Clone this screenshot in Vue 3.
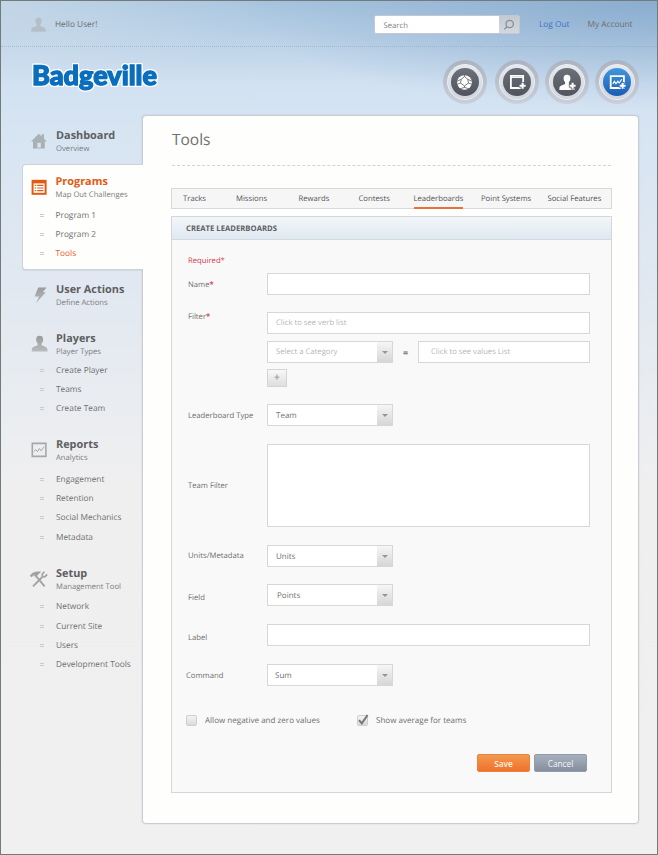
<template>
  <div class="page">
    <header class="topbar">
      <svg class="topbar-avatar" viewBox="0 0 16 16">
        <path :d="personPath" />
      </svg>
      <span class="topbar-hello">Hello User!</span>
      <div class="search">
        <span class="search-text">Search</span>
        <span class="search-button">
          <svg viewBox="0 0 12 12">
            <circle cx="6.7" cy="5" r="3.7" />
            <path d="M4 7.7 1.2 10.4" />
          </svg>
        </span>
      </div>
      <a class="topbar-link topbar-link--logout">Log Out</a>
      <a class="topbar-link">My Account</a>
    </header>

    <div class="brand">
      <svg class="logo" viewBox="0 0 140 46">
        <text x="5" y="28" textLength="125" lengthAdjust="spacingAndGlyphs">Badgeville</text>
      </svg>
      <nav class="actions">
        <span v-for="action in actions" :key="action" class="action" :class="`action--${action}`">
          <span class="action-ring">
            <span class="action-core">
              <svg viewBox="0 0 18 18">
                <template v-if="action === 'globe'">
                  <circle cx="9" cy="9" r="7.8" fill="#fff" />
                  <path class="cut" d="M1.2 7.6 5.6 5.6 9 2.6l3.400 3 4.400 2M9 .8v1.800M1.400 10.800l3.400-1.200L9 12.600l4.200-3 3.400 1.200M4.800 9.600 5.600 5.600M13.200 9.600l-.8-4M9 12.600v1.600l-4.600 1.400M9 14.200l4.600 1.400" />
                </template>
                <template v-else-if="action === 'window'">
                  <path class="line" d="M2 2h13v12.8H2z" />
                  <path class="line line--thin" d="M2 3.6h13" />
                </template>
                <template v-else-if="action === 'person'">
                  <path fill="#fff" transform="translate(0 .4) scale(1.06)" :d="personPath" />
                </template>
                <template v-else>
                  <path class="line" d="M1.8 2.2h14v12.6h-14z" />
                  <path class="line line--thin" d="m4 10.4 1.8-2.6 1.6 2.6 2-2.8 1.4 2 2.8-4" />
                </template>
                <path class="plus-edge" d="M14.4 8.4v8M10.4 12.4h8" />
                <path v-if="action !== 'globe'" class="plus" d="M14.4 9.2v6.4M11.2 12.4h6.4" />
              </svg>
            </span>
          </span>
        </span>
      </nav>
    </div>

    <div class="body">
      <aside class="sidebar">
        <section
          v-for="section in sections"
          :key="section.id"
          class="section"
          :class="[`section--${section.id}`, { 'section--active': section.active }]"
        >
          <div class="section-head">
            <svg class="section-icon" viewBox="0 0 18 18">
              <defs>
                <linearGradient :id="`grad-${section.id}`" x1="0" y1="0" x2="0" y2="1">
                  <stop offset="0" stop-color="#999b9d" />
                  <stop offset="1" stop-color="#b9bbbd" />
                </linearGradient>
              </defs>
              <g v-if="section.id === 'dashboard'" fill="#a9b0b6">
                <path d="M1 9.4 8.8 1.8l2.8 2.7V2.2h2.4v4.6L16.8 9.4h-2v7.2H3V9.4z" />
                <path fill="#dbe4ec" d="M7.4 10.8h3.4v4.8H7.4z" />
              </g>
              <g v-else-if="section.id === 'programs'">
                <path fill="#e25a12" d="M1.6 1.8h15v15h-15z" />
                <path fill="#fff" d="M3.6 5.4h11v9.4h-11z" />
                <path stroke="#e25a12" stroke-width="1.2" d="M4.8 7.4h1.4M7.2 7.4h6.2M4.8 10h1.4M7.2 10h6.2M4.8 12.6h1.4M7.2 12.6h6.2" />
              </g>
              <path
                v-else-if="section.id === 'user-actions'"
                :fill="`url(#grad-${section.id})`"
                d="M8.200 1.600h8.400l-3.900 4.600h3L6 17.200l2.900-6.800H4.600z"
              />
              <path
                v-else-if="section.id === 'players'"
                :fill="`url(#grad-${section.id})`"
                transform="translate(1.4 .4) scale(1.03)"
                :d="personPath"
              />
              <g v-else-if="section.id === 'reports'" fill="none" stroke="#a5a7a9">
                <path stroke-width="1.6" d="M2.3 2.4h13.600v13H2.3z" />
                <path d="m4 10.600 1.6-2 1.8 2 2-3 1.6 2.2 3.2-4.2" />
              </g>
              <g v-else fill="none" stroke="#a0a2a4">
                <path stroke-width="1.9" d="m6 6 8.6 10.4M3 16.4 12.3 7" />
                <path stroke-width="2.5" d="M.8 6.6C2.6 3.6 5 2.6 8.4 2.7L4.8 6.4" />
                <path stroke-width="1.7" d="M14.4 1.8 12.2 4.2l.3 2.3 2.3.4 2.4-2.5" />
              </g>
            </svg>
            <div>
              <h2 class="section-title">{{ section.title }}</h2>
              <p class="section-sub">{{ section.sub }}</p>
            </div>
          </div>
          <ul v-if="section.items" class="section-list">
            <li v-for="item in section.items" :key="item" :class="{ current: item === 'Tools' }">{{ item }}</li>
          </ul>
        </section>
      </aside>

      <main class="card">
        <h1 class="card-title">Tools</h1>
        <nav class="tabs">
          <a v-for="tab in tabs" :key="tab" class="tab" :class="{ 'tab--active': tab === 'Leaderboards' }">{{ tab }}</a>
        </nav>

        <section class="panel">
          <h3 class="panel-title">CREATE LEADERBOARDS</h3>
          <div class="form">
            <p class="required">Required*</p>

            <div class="row row--name">
              <label>Name<i>*</i></label>
              <div class="input" />
            </div>
            <div class="row row--filter">
              <label>Filter<i>*</i></label>
              <div class="filter">
                <div class="input input--hint">Click to see verb list</div>
                <div class="filter-pair">
                  <div class="select select--hint">Select a Category<span class="select-arrow" /></div>
                  <span class="equals">=</span>
                  <div class="input input--values">Click to see values List</div>
                </div>
                <span class="add">+</span>
              </div>
            </div>
            <div class="row row--type">
              <label>Leaderboard Type</label>
              <div class="select">Team<span class="select-arrow" /></div>
            </div>
            <div class="row row--team">
              <label>Team Filter</label>
              <div class="input input--area" />
            </div>
            <div class="row row--units">
              <label>Units/Metadata</label>
              <div class="select">Units<span class="select-arrow" /></div>
            </div>
            <div class="row row--field">
              <label>Field</label>
              <div class="select">Points<span class="select-arrow" /></div>
            </div>
            <div class="row row--label">
              <label>Label</label>
              <div class="input" />
            </div>
            <div class="row row--command">
              <label>Command</label>
              <div class="select">Sum<span class="select-arrow" /></div>
            </div>

            <div class="checks">
              <span class="check"><span class="box" />Allow negative and zero values</span>
              <span class="check">
                <span class="box">
                  <svg viewBox="0 0 12 12"><path d="m2 6.2 2.8 3.2L10.6 1" /></svg>
                </span>Show average for teams
              </span>
            </div>
            <div class="buttons">
              <button class="button button--save">Save</button>
              <button class="button button--cancel">Cancel</button>
            </div>
          </div>
        </section>
      </main>
    </div>
  </div>
</template>

<script setup>
const personPath =
  'M8 .4c2.4 0 3.6 1.6 3.4 3.8-.1 1.7-.8 2.9-1.5 3.7v1.5c.3 1.1 5.7 1.3 5.7 4.3v1.9H.4v-1.9c0-3 5.4-3.2 5.7-4.3V7.9C5.4 7.1 4.7 5.9 4.6 4.2 4.4 2 5.6.4 8 .4z'

const actions = ['globe', 'window', 'person', 'report']

const tabs = ['Tracks', 'Missions', 'Rewards', 'Contests', 'Leaderboards', 'Point Systems', 'Social Features']

const sections = [
  { id: 'dashboard', title: 'Dashboard', sub: 'Overview' },
  {
    id: 'programs',
    title: 'Programs',
    sub: 'Map Out Challenges',
    active: true,
    items: ['Program 1', 'Program 2', 'Tools'],
  },
  { id: 'user-actions', title: 'User Actions', sub: 'Define Actions' },
  { id: 'players', title: 'Players', sub: 'Player Types', items: ['Create Player', 'Teams', 'Create Team'] },
  {
    id: 'reports',
    title: 'Reports',
    sub: 'Analytics',
    items: ['Engagement', 'Retention', 'Social Mechanics', 'Metadata'],
  },
  {
    id: 'setup',
    title: 'Setup',
    sub: 'Management Tool',
    items: ['Network', 'Current Site', 'Users', 'Development Tools'],
  },
]
</script>

<style>
body {
  margin: 0;
}
</style>

<style scoped>
.page {
  box-sizing: border-box;
  width: 658px;
  height: 855px;
  overflow: hidden;
  border: 1px solid #737a7a;
  background:
    radial-gradient(ellipse 420px 110px at 100% 0, rgba(118, 156, 196, 0.6), rgba(118, 156, 196, 0)),
    radial-gradient(ellipse 260px 90px at 0 0, rgba(225, 233, 240, 0.45), rgba(225, 233, 240, 0)),
    linear-gradient(180deg, #a8c5df 0, #bdd3e8 42px, #d2e2f2 85px, #d6e4f2 120px, #e1e8f1 280px, #efeff0 480px, #f0f0f0 100%);
  font-family: 'Open Sans', sans-serif;
  font-size: 7.7px;
  color: #6f6f6f;
  text-rendering: geometricPrecision;
}

.page * {
  box-sizing: border-box;
}

h1,
h2,
h3,
p,
ul {
  margin: 0;
  padding: 0;
}

/* top bar */
.topbar {
  display: flex;
  align-items: center;
  height: 46px;
  padding-left: 30px;
  border-bottom: 1px dotted rgba(140, 160, 180, 0.5);
}

.topbar-avatar {
  width: 15px;
  height: 15px;
  margin-top: 1px;
  fill: #b5bec6;
}

.topbar-hello {
  width: 290px;
  margin: 1px 0 0 9px;
  font-size: 8.3px;
}

.search {
  display: flex;
  align-items: center;
  width: 146px;
  height: 19px;
  margin: 2px 0 0 29px;
  border: 1px solid #bfc8d3;
  border-radius: 2px;
  background: #fff;
}

.search-text {
  flex: 1;
  padding: 2px 0 0 8.5px;
  color: #808080;
}

.search-button {
  display: flex;
  align-items: center;
  justify-content: center;
  width: 20px;
  height: 17px;
  background: linear-gradient(#c3cad4, #d3d8df);
}

.search-button svg {
  width: 12px;
  height: 12px;
  fill: none;
  stroke: #8a8d91;
  stroke-width: 1.3;
}

.topbar-link {
  margin: 1px 0 0 18px;
  font-size: 8.3px;
}

.topbar-link--logout {
  margin-left: 19px;
  color: #3f74c6;
}

/* logo and round buttons */
.brand {
  display: flex;
  justify-content: space-between;
  height: 68px;
  padding: 13px 18px 0 26px;
}

.logo {
  width: 140px;
  height: 46px;
  margin-top: -3px;
  filter: drop-shadow(1px 0 #fff) drop-shadow(-1px 0 #fff) drop-shadow(0 1px #fff) drop-shadow(0 -1px #fff);
}

.logo text {
  font: 900 27px Lato, sans-serif;
  fill: #0a6ebd;
  stroke: #0a6ebd;
  stroke-width: 1.3px;
}

.actions {
  display: flex;
  gap: 6px;
}

.action {
  display: flex;
  width: 44px;
  height: 44px;
  padding: 4px;
  border-radius: 50%;
  background: linear-gradient(#abb3c0, #c9d0db);
}

.action--globe {
  margin-right: 2.5px;
}

.action-ring {
  display: flex;
  align-items: center;
  justify-content: center;
  width: 36px;
  height: 36px;
  border: 1px solid #eceff3;
  border-radius: 50%;
  background: linear-gradient(#e6e9ee, #d0d5de);
}

.action-core {
  display: flex;
  align-items: center;
  justify-content: center;
  width: 28px;
  height: 28px;
  border-radius: 50%;
  background: linear-gradient(#6c7179, #50555d);
}

.action--report .action-core {
  background: linear-gradient(#3f97dc, #1c5cb4);
}

.action-core svg {
  width: 17px;
  height: 17px;
  fill: none;
}

.cut {
  stroke: #5f646c;
  stroke-width: 0.9;
}

.line {
  stroke: #fff;
  stroke-width: 1.9;
}

.line--thin {
  stroke-width: 1.2;
}

.plus-edge {
  stroke: #5a5f67;
  stroke-width: 4;
}

.action--globe .plus-edge {
  display: none;
}

.action--report .plus-edge {
  stroke: #2465bb;
}

.plus {
  stroke: #fff;
  stroke-width: 2.2;
}

/* sidebar */
.body {
  display: flex;
}

.sidebar {
  width: 141px;
  padding-top: 13.5px;
}

.section {
  padding-left: 29px;
}

.section-head {
  display: flex;
  gap: 8px;
  height: 26px;
}

.section-icon {
  width: 18px;
  height: 18px;
  margin-top: 3px;
}

.section-title {
  font-size: 10.9px;
  line-height: 13px;
  font-weight: 700;
  color: #5f6061;
  white-space: nowrap;
}

.section-sub {
  margin-top: 1px;
  line-height: 13px;
  white-space: nowrap;
  color: #7c7c7c;
}

.section-list {
  list-style: none;
  font-size: 8.3px;
  line-height: 19.25px;
}

.section-list li {
  display: flex;
  align-items: center;
  gap: 12px;
  padding-left: 10px;
  white-space: nowrap;
}

.section-list li::before {
  content: '';
  width: 4px;
  height: 3px;
  background: linear-gradient(#c8cbcf 1px, transparent 1px 2px, #c8cbcf 2px);
}

.section-list .current {
  color: #e5622a;
}

.section--active {
  position: relative;
  z-index: 1;
  height: 106px;
  margin: 9px -1px 0 21px;
  padding: 10px 0 0 7px;
  border: 1px solid #cfd3d9;
  border-right: 0;
  border-radius: 4px 0 0 4px;
  background: #fefefc;
  box-shadow: 0 1px 1px rgba(0, 0, 0, 0.06);
}

.section--active .section-head {
  gap: 7.5px;
}

.section--active .section-title {
  color: #e25a12;
}

.section--programs .section-list {
  margin: 5px 0 0 -0.5px;
}

.section--user-actions {
  margin-top: 13px;
}

.section--players {
  margin-top: 23px;
}

.section--players .section-list {
  margin-top: 3px;
}

.section--reports {
  margin-top: 20px;
}

.section--reports .section-list {
  margin-top: 5.5px;
}

.section--setup {
  margin-top: 20.5px;
}

.section--setup .section-list {
  margin-top: 4px;
}

/* main card */
.card {
  width: 497px;
  height: 709px;
  padding: 0 26px 0 28px;
  border: 1px solid #c9ccd3;
  border-radius: 4px;
  background: #fefefc;
  box-shadow: 0 0 2px rgba(0, 0, 0, 0.12);
}

.card-title {
  height: 50px;
  margin: 0 1px;
  border-bottom: 1px dashed #d4d4d4;
  font-size: 15.5px;
  line-height: 46px;
  font-weight: 400;
  color: #707070;
}

.tabs {
  display: grid;
  grid-template-columns: 53px 62.5px 60px 55px 67.5px 66.5px auto;
  justify-items: start;
  height: 21px;
  margin-top: 22px;
  padding-left: 11px;
  border: 1px solid #d8d9db;
  background: #f6f6f6;
  line-height: 20px;
  color: #555;
  white-space: nowrap;
}

.tab--active {
  height: 20px;
  border-bottom: 2px solid #e2733b;
}

.panel {
  height: 577px;
  margin-top: 7px;
  border: 1px solid #d5d6d9;
  background: #f9f9f9;
}

.panel-title {
  height: 23px;
  padding-left: 14px;
  border-bottom: 1px solid #d3d9df;
  background: linear-gradient(#f2f6f9, #e0e9f1);
  font-size: 7.7px;
  line-height: 24px;
  font-weight: 700;
  color: #5c6064;
}

.form {
  padding: 15px 21px 0 16px;
}

.required {
  line-height: 12px;
  color: #d23a4e;
}

.row {
  display: flex;
  align-items: center;
}

.row label {
  flex: none;
  width: 79px;
}

.row i {
  font-style: normal;
  font-weight: 700;
  color: #d9404e;
}

.input {
  width: 323px;
  height: 22px;
  padding-left: 8px;
  border: 1px solid #d7d7d7;
  background: #fff;
  line-height: 20px;
}

.input--hint,
.input--values,
.select--hint {
  color: #b8b8b8;
}

.input--hint {
  line-height: 21px;
}

.input--values {
  width: 173px;
  padding-left: 12px;
}

.input--area {
  height: 83px;
}

.select {
  display: flex;
  justify-content: space-between;
  width: 126px;
  height: 22px;
  padding-left: 8px;
  border: 1px solid #d7d7d7;
  background: #fff;
  font-size: 8px;
  line-height: 21px;
}

.select--hint {
  font-size: 7.7px;
}

.select-arrow {
  display: flex;
  align-items: center;
  justify-content: center;
  width: 15px;
  height: 20px;
  background: linear-gradient(#f6f6f6, #d6d6d6);
}

.select-arrow::before {
  content: '';
  border: 3px solid transparent;
  border-top: 3px solid #959595;
  border-bottom: 0;
}

.row--name {
  margin-top: 6px;
}

.row--name label {
  padding-top: 1px;
}

.row--filter {
  align-items: flex-start;
  margin-top: 17px;
}

.filter-pair {
  display: flex;
  align-items: center;
  margin-top: 7px;
}

.equals {
  width: 25px;
  font-size: 9px;
  font-weight: 700;
  text-align: center;
}

.filter-pair .input--values {
  width: 172px;
}

.add {
  display: block;
  width: 20px;
  height: 18px;
  margin-top: 6px;
  border: 1px solid #d4d4d4;
  background: linear-gradient(#f8f8f8, #dedede);
  font-size: 11px;
  line-height: 15px;
  font-weight: 600;
  text-align: center;
  color: #999;
}

.row--type {
  margin-top: 17px;
}

.row--type label {
  padding-top: 1px;
}

.row--team,
.row--units,
.row--label,
.row--command {
  margin-top: 18px;
}

.row--field {
  margin-top: 17px;
}

.row--field label,
.row--label label {
  padding-top: 5px;
}

.row--field .select {
  padding-left: 9px;
}

.row--command {
  margin-left: -2px;
}

.row--command label {
  width: 81px;
  padding-top: 2px;
}

.row--command .select {
  padding-left: 7px;
}

.checks {
  display: flex;
  margin: 28px 0 0 -2px;
  font-size: 8.05px;
}

.check {
  display: flex;
  align-items: center;
  width: 171px;
  height: 12px;
  white-space: nowrap;
}

.box {
  width: 11px;
  height: 11px;
  margin-right: 8px;
  border: 1px solid #cfcfcf;
  border-radius: 2px;
  background: linear-gradient(#f4f4f4, #dadada);
}

.box svg {
  display: block;
  width: 12px;
  height: 12px;
  margin: -2px 0 0 -1px;
  overflow: visible;
  fill: none;
  stroke: #777;
  stroke-width: 2;
}

.buttons {
  display: flex;
  justify-content: flex-end;
  gap: 4px;
  margin: 28px 3px 0 0;
}

.button {
  width: 53px;
  height: 18px;
  padding: 0;
  border: 1px solid #e9813f;
  border-radius: 2px;
  background: linear-gradient(#f4984e, #ef722c);
  font: 600 8.3px 'Open Sans', sans-serif;
  color: #fff4ea;
}

.button--cancel {
  border-color: #929ba8;
  background: linear-gradient(#a7b0be, #848e9c);
  font-weight: 400;
  color: #f2f4f7;
}
</style>
